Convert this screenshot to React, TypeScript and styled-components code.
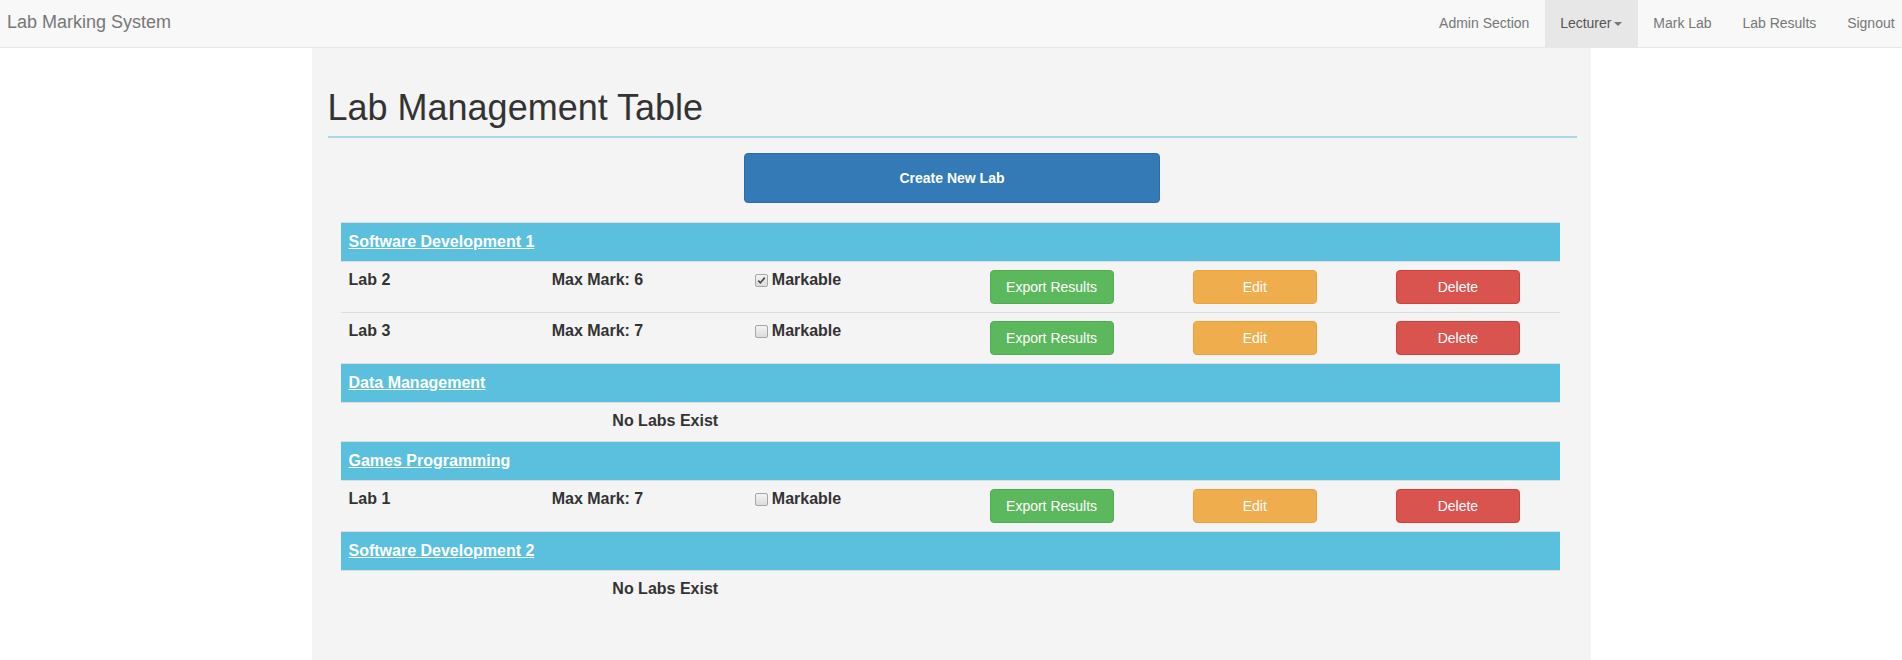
import React from "react";
import styled, { createGlobalStyle } from "styled-components";

const GlobalStyle = createGlobalStyle`
  html, body {
    margin: 0;
    padding: 0;
    background: #ffffff;
    overflow-x: hidden;
  }
  body {
    font-family: "Liberation Sans", Arial, Helvetica, sans-serif;
    font-size: 14px;
    line-height: 20px;
    color: #333333;
  }
  * { box-sizing: border-box; }
`;

const Navbar = styled.nav`
  display: flex;
  justify-content: space-between;
  align-items: stretch;
  height: 48px;
  background: #f8f8f8;
  border-bottom: 1px solid #e7e7e7;
`;

const Brand = styled.a`
  padding: 12px 0 0 7px;
  font-size: 18px;
  line-height: 20px;
  color: #777777;
  text-decoration: none;
`;

const NavList = styled.ul`
  display: flex;
  list-style: none;
  margin: 0 -8px 0 0;
  padding: 0;
`;

const NavItem = styled.li<{ $active?: boolean }>`
  display: flex;
  align-items: flex-start;
  padding: 13px 15.4px 0;
  height: 47px;
  font-size: 14px;
  line-height: 20px;
  color: ${(p) => (p.$active ? "#555555" : "#777777")};
  background: ${(p) => (p.$active ? "#e7e7e7" : "transparent")};
  white-space: nowrap;
`;

const Caret = styled.span`
  display: inline-block;
  width: 0;
  height: 0;
  margin: 9px 0 0 3px;
  border-top: 4px solid #777777;
  border-left: 4px solid transparent;
  border-right: 4px solid transparent;
`;

const Panel = styled.main`
  width: 1279px;
  min-height: 612px;
  margin: 0 auto;
  background: #f4f4f4;
  padding: 40px 14px 20px 16px;
  display: flex;
  flex-direction: column;
`;

const PageHeader = styled.div`
  padding-bottom: 8px;
  border-bottom: 2px solid #a8dae7;
`;

const Title = styled.h1`
  margin: 0;
  font-size: 36px;
  font-weight: 500;
  line-height: 39.6px;
  color: #333333;
`;

const CreateButton = styled.button`
  align-self: center;
  width: 416px;
  height: 50px;
  margin-top: 15px;
  background: #337ab7;
  border: 1px solid #2e6da4;
  border-radius: 4px;
  color: #ffffff;
  font-family: inherit;
  font-size: 14px;
  font-weight: bold;
  line-height: 20px;
`;

const Table = styled.div`
  margin: 19px 17px 0 13px;
  display: grid;
  grid-template-columns: repeat(6, 1fr);
`;

const CategoryRow = styled.div`
  grid-column: 1 / -1;
  background: #5bc0de;
  border-top: 1px solid #dddddd;
  padding: 9px 8px;
  font-size: 16px;
  line-height: 20px;
`;

const CategoryLink = styled.a`
  color: #ffffff;
  font-weight: bold;
  text-decoration: underline;
`;

const Cell = styled.div<{ $center?: boolean }>`
  border-top: 1px solid #dddddd;
  padding: 8px;
  font-size: 16px;
  font-weight: bold;
  line-height: 20px;
  display: flex;
  align-items: flex-start;
  justify-content: ${(p) => (p.$center ? "center" : "flex-start")};
`;

const EmptyCell = styled.div<{ $span: string }>`
  grid-column: ${(p) => p.$span};
  border-top: 1px solid #dddddd;
`;

const NoLabsCell = styled.div`
  grid-column: 2 / 3;
  border-top: 1px solid #dddddd;
  padding: 8px 0 10px 40px;
  font-size: 16px;
  font-weight: bold;
  line-height: 20px;
  text-align: center;
  white-space: nowrap;
`;

const Checkbox = styled.span`
  display: inline-flex;
  align-items: center;
  justify-content: center;
  flex: none;
  width: 13px;
  height: 13px;
  margin: 4px 4px 0 0;
  border: 1px solid #a6a6a6;
  border-radius: 2px;
  background: linear-gradient(#f3f3f3, #dcdcdc);
`;

const ActionButton = styled.button<{ $bg: string; $border: string }>`
  width: 124px;
  height: 34px;
  padding: 6px 12px;
  background: ${(p) => p.$bg};
  border: 1px solid ${(p) => p.$border};
  border-radius: 4px;
  color: #ffffff;
  font-family: inherit;
  font-size: 14px;
  font-weight: normal;
  line-height: 20px;
  white-space: nowrap;
`;

type Lab = { name: string; max: number; markable: boolean };
type Module = { title: string; labs: Lab[] };

const modules: Module[] = [
  {
    title: "Software Development 1",
    labs: [
      { name: "Lab 2", max: 6, markable: true },
      { name: "Lab 3", max: 7, markable: false },
    ],
  },
  { title: "Data Management", labs: [] },
  { title: "Games Programming", labs: [{ name: "Lab 1", max: 7, markable: false }] },
  { title: "Software Development 2", labs: [] },
];

function Check({ checked }: { checked: boolean }) {
  return (
    <Checkbox>
      {checked && (
        <svg width="9" height="9" viewBox="0 0 9 9">
          <path d="M1.2 4.6 L3.4 6.8 L7.8 1.6" fill="none" stroke="#4a4a4a" strokeWidth="1.7" />
        </svg>
      )}
    </Checkbox>
  );
}

function LabRow({ lab }: { lab: Lab }) {
  return (
    <>
      <Cell>{lab.name}</Cell>
      <Cell>Max Mark: {lab.max}</Cell>
      <Cell>
        <Check checked={lab.markable} />
        Markable
      </Cell>
      <Cell $center>
        <ActionButton $bg="#5cb85c" $border="#4cae4c">Export Results</ActionButton>
      </Cell>
      <Cell $center>
        <ActionButton $bg="#f0ad4e" $border="#eea236">Edit</ActionButton>
      </Cell>
      <Cell $center>
        <ActionButton $bg="#d9534f" $border="#d43f3a">Delete</ActionButton>
      </Cell>
    </>
  );
}

export default function App() {
  return (
    <>
      <GlobalStyle />
      <Navbar>
        <Brand href="#">Lab Marking System</Brand>
        <NavList>
          <NavItem>Admin Section</NavItem>
          <NavItem $active>
            Lecturer
            <Caret />
          </NavItem>
          <NavItem>Mark Lab</NavItem>
          <NavItem>Lab Results</NavItem>
          <NavItem>Signout</NavItem>
        </NavList>
      </Navbar>
      <Panel>
        <PageHeader>
          <Title>Lab Management Table</Title>
        </PageHeader>
        <CreateButton>Create New Lab</CreateButton>
        <Table>
          {modules.map((m) => (
            <React.Fragment key={m.title}>
              <CategoryRow>
                <CategoryLink href="#">{m.title}</CategoryLink>
              </CategoryRow>
              {m.labs.length === 0 ? (
                <>
                  <EmptyCell $span="1 / 2" />
                  <NoLabsCell>No Labs Exist</NoLabsCell>
                  <EmptyCell $span="3 / -1" />
                </>
              ) : (
                m.labs.map((l) => <LabRow key={l.name} lab={l} />)
              )}
            </React.Fragment>
          ))}
        </Table>
      </Panel>
    </>
  );
}
